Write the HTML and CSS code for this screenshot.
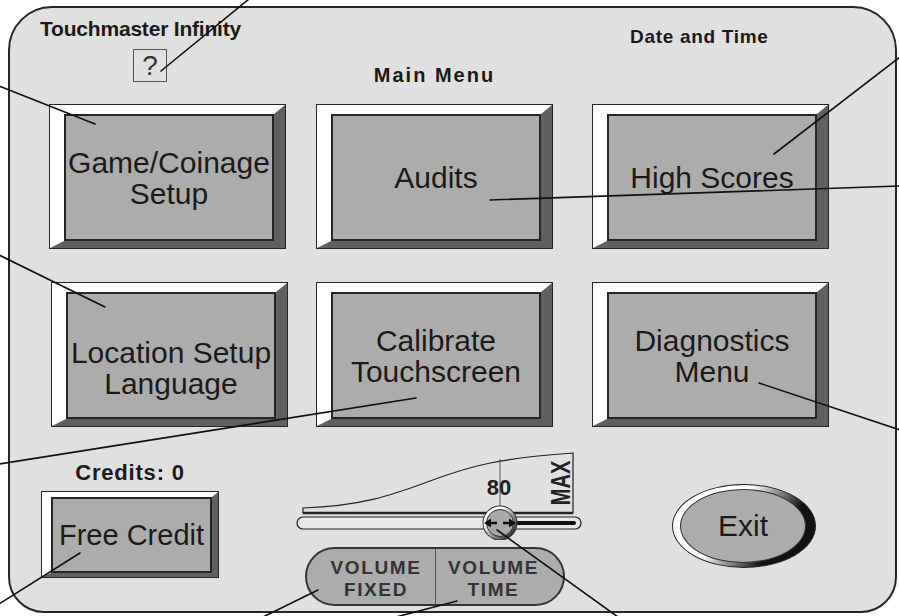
FILE: index.html
```html
<!DOCTYPE html>
<html lang="en">

<head>
  <meta charset="UTF-8">
  <meta name="viewport" content="width=device-width, initial-scale=1.0">
  <title>Touchmaster Infinity - Main Menu</title>
  <link rel="stylesheet" href="styles.css">
</head>

<body>

  <div class="screen">
    <div class="panel">

      <header class="top">
        <div class="brand">
          <h1 class="brand-name">Touchmaster Infinity</h1>
          <div class="help">?</div>
        </div>
        <h2 class="menu-title">Main Menu</h2>
        <div class="clock">Date and Time</div>
      </header>

      <div class="menu">
        <div class="key"><div class="key-face">Game/Coinage<br>Setup</div></div>
        <div class="key"><div class="key-face">Audits</div></div>
        <div class="key"><div class="key-face">High Scores</div></div>
        <div class="key key-shift"><div class="key-face key-low">Location Setup<br>Language</div></div>
        <div class="key"><div class="key-face">Calibrate<br>Touchscreen</div></div>
        <div class="key"><div class="key-face">Diagnostics<br>Menu</div></div>
      </div>

      <div class="bottom">
        <div class="credits">
          <div class="credits-label">Credits: 0</div>
          <div class="key key-small"><div class="key-face">Free Credit</div></div>
        </div>

        <div class="volume">
          <svg class="slider" width="290" height="90" viewBox="0 0 290 90">
            <defs>
              <linearGradient id="knobRing" x1="0" y1="0" x2="1" y2="1">
                <stop offset="0.3" stop-color="#fff" />
                <stop offset="0.85" stop-color="#333" />
              </linearGradient>
            </defs>
            <!-- volume curve -->
            <path d="M9,58 C66,56 96,46 136,31 S206,8 279,3 L279,63 L9,63 Z" fill="#e0e0e0" stroke="#222" stroke-width="1.2" />
            <line x1="9" y1="63" x2="279" y2="63" stroke="#222" stroke-width="2.4" />
            <line x1="206" y1="9" x2="206" y2="63" stroke="#555" stroke-width="1" />
            <text class="slider-value" x="205" y="45" text-anchor="middle">80</text>
            <text class="slider-max" transform="translate(276 33) rotate(-90) scale(1 1.4)" text-anchor="middle">MAX</text>
            <!-- track -->
            <rect x="3" y="67" width="284" height="12" rx="6" fill="#e8e8e8" stroke="#222" stroke-width="1.2" />
            <rect x="212" y="71" width="70" height="4" rx="2" fill="#111" />
            <!-- knob -->
            <circle cx="206" cy="73" r="17.5" fill="#333" />
            <circle cx="206" cy="73" r="16.5" fill="url(#knobRing)" />
            <circle cx="206" cy="73" r="13.5" fill="#a8a8a8" stroke="#333" />
            <path d="M190,73 L197,68.5 L197,77.5 Z M222,73 L215,68.5 L215,77.5 Z" fill="#111" />
            <path d="M196,73 H203 M209,73 H216" stroke="#111" stroke-width="2.5" />
          </svg>

          <div class="modes">
            <div class="mode mode-left">VOLUME<br>FIXED</div>
            <div class="mode mode-right">VOLUME<br>TIME</div>
          </div>
        </div>

        <div class="exit"><div class="exit-face">Exit</div></div>
      </div>

    </div>

    <!-- callout lines -->
    <svg class="leaders" width="899" height="616" viewBox="0 0 899 616">
      <g stroke="#111" stroke-width="1.6" stroke-linecap="round">
        <line x1="161" y1="71" x2="249" y2="-1" />
        <line x1="-1" y1="86" x2="95" y2="124" />
        <line x1="900" y1="57" x2="774" y2="154" />
        <line x1="490" y1="200" x2="900" y2="186" />
        <line x1="-1" y1="255" x2="105" y2="307" />
        <line x1="759" y1="383" x2="900" y2="430" />
        <line x1="416" y1="398" x2="-1" y2="464" />
        <line x1="80" y1="553" x2="-1" y2="604" />
        <line x1="318" y1="590" x2="263" y2="617" />
        <line x1="457" y1="601" x2="396" y2="617" />
        <line x1="497" y1="530" x2="618" y2="617" />
      </g>
    </svg>
  </div>

</body>

</html>
```

FILE: styles.css
```css
* {
  box-sizing: border-box;
}

body {
  margin: 0;
  background-color: #fff;
  color: #1c1a19;
  font-family: "Liberation Sans", Arial, sans-serif;
}

.screen {
  position: relative;
  width: 899px;
  height: 616px;
  overflow: hidden;
}

.panel {
  margin: 6px 0 0 8px;
  width: 889px;
  height: 607px;
  border: 2px solid #262626;
  border-radius: 44px 44px 36px 36px;
  background-color: #e0e0e0;
}

/* header */

.top {
  display: grid;
  grid-template-columns: 307px 276px 1fr;
  height: 97px;
}

.brand {
  padding: 10px 0 0 30px;
}

.brand-name {
  margin: 0;
  font-size: 21px;
  line-height: 21px;
  font-weight: bold;
  letter-spacing: -0.2px;
  white-space: nowrap;
}

.help {
  margin: 10px 0 0 93px;
  width: 34px;
  height: 33px;
  border: 1px solid #555;
  font-size: 28px;
  line-height: 31px;
  text-align: center;
  color: #333;
}

.menu-title {
  margin: 57px 0 0;
  width: 235px;
  font-size: 20px;
  line-height: 20px;
  font-weight: bold;
  letter-spacing: 2px;
  text-align: center;
}

.clock {
  padding: 19px 0 0 37px;
  font-size: 19px;
  line-height: 19px;
  font-weight: bold;
  letter-spacing: 0.7px;
  white-space: nowrap;
}

/* menu keys */

.menu {
  display: grid;
  grid-template-columns: 267px 276px 237px;
  grid-template-rows: 143px 143px;
  row-gap: 35px;
  padding-left: 40px;
}

.key {
  width: 235px;
  height: 143px;
  border-style: solid;
  border-width: 9px 11px 7px 14px;
  border-color: #fff #606060 #606060 #fff;
  outline: 1px solid #262626;
}

.key-shift {
  margin-left: 2px;
}

.key-face {
  height: 100%;
  border: 2px solid #262626;
  background-color: #acacac;
  display: flex;
  align-items: center;
  justify-content: center;
  text-align: center;
  font-size: 30px;
  line-height: 31px;
}

.key-low {
  padding-top: 24px;
}

/* bottom row */

.bottom {
  display: flex;
  align-items: flex-start;
}

.credits {
  margin: 36px 0 0 32px;
  width: 176px;
}

.credits-label {
  font-size: 22px;
  line-height: 22px;
  font-weight: bold;
  letter-spacing: 0.8px;
  text-align: center;
}

.key-small {
  width: 176px;
  height: 85px;
  margin-top: 8px;
  border-width: 5px 6px 4px 9px;
}

.key-small .key-face {
  font-size: 29px;
}

.volume {
  margin: 24px 0 0 76px;
  width: 290px;
}

.slider {
  display: block;
}

.slider-value {
  font: bold 22px "Liberation Sans", Arial, sans-serif;
  fill: #222;
}

.slider-max {
  font: bold 20px "Liberation Sans", Arial, sans-serif;
  fill: #222;
}

.modes {
  display: grid;
  grid-template-columns: 128px 1fr;
  width: 260px;
  height: 59px;
  margin: 7px 0 0 11px;
  border: 2px solid #333;
  border-radius: 30px;
  background-color: #acacac;
  overflow: hidden;
}

.mode {
  display: flex;
  align-items: center;
  justify-content: center;
  padding-top: 5px;
  font-size: 19px;
  line-height: 22px;
  font-weight: bold;
  letter-spacing: 1.6px;
  color: #333;
  text-align: center;
}

.mode-left {
  padding-left: 10px;
}

.mode-right {
  padding-right: 12px;
  border-left: 1px solid #555;
}

.exit {
  margin: 58px 0 0 88px;
  width: 144px;
  height: 84px;
  padding: 4px 9px 4px 7px;
  border: 1px solid #222;
  border-radius: 50%;
  background: linear-gradient(125deg, #fff 40%, #111 72%);
}

.exit-face {
  height: 100%;
  border: 1px solid #333;
  border-radius: 50%;
  background-color: #acacac;
  display: flex;
  align-items: center;
  justify-content: center;
  font-size: 30px;
}

.leaders {
  position: absolute;
  top: 0;
  left: 0;
  pointer-events: none;
}
```
